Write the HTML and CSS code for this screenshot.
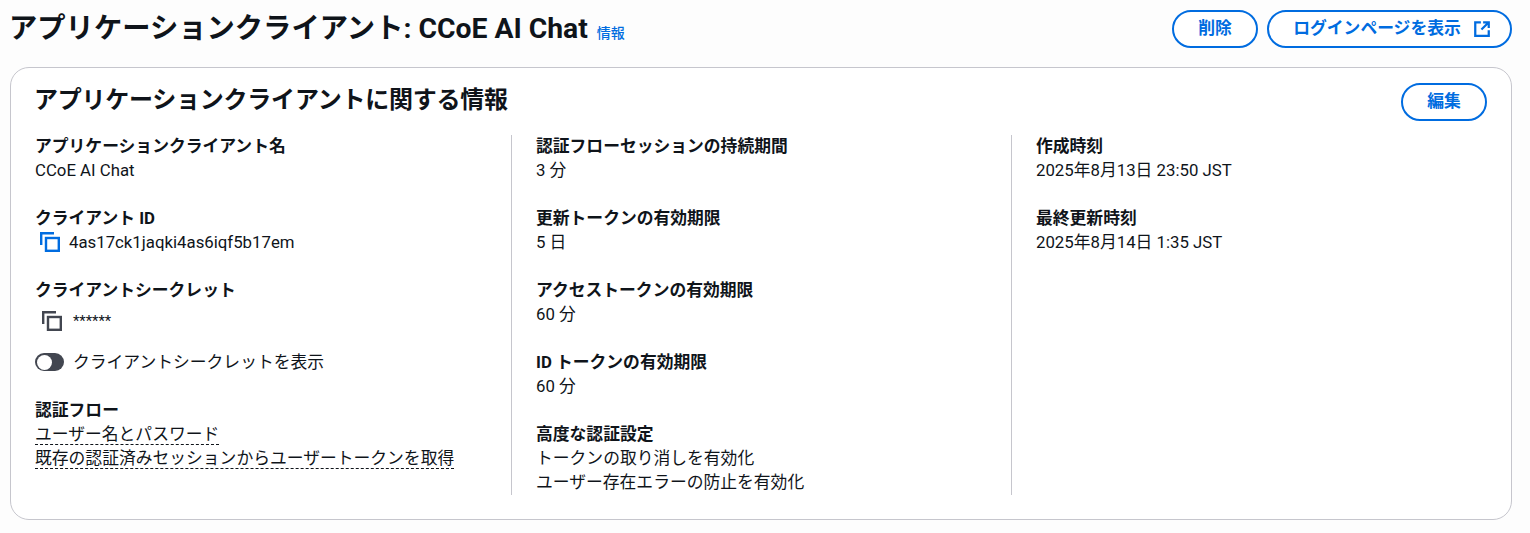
FILE: index.html
```html
<!DOCTYPE html>
<html lang="ja">
<head>
  <meta charset="UTF-8" />
  <title>アプリケーションクライアント: CCoE AI Chat</title>
  <link rel="stylesheet" href="styles.css">
</head>
<body>
  <div class="page-header">
    <div class="title-wrap">
      <h1>アプリケーションクライアント: CCoE AI Chat</h1>
      <a class="info-link">情報</a>
    </div>
    <div class="actions">
      <button class="btn btn-delete">削除</button>
      <button class="btn btn-login">ログインページを表示
        <svg class="ext-icon" viewBox="0 0 16 16" fill="none" stroke="currentColor" stroke-width="2">
          <path d="M7 2H2v12h12V9" />
          <path d="M9 2h5v5M14 2L7.5 8.5" />
        </svg>
      </button>
    </div>
  </div>

  <div class="card">
    <div class="card-header">
      <h2>アプリケーションクライアントに関する情報</h2>
      <button class="btn btn-edit">編集</button>
    </div>
    <div class="columns">
      <div class="col">
        <div class="item">
          <div class="label">アプリケーションクライアント名</div>
          <div class="value">CCoE AI Chat</div>
        </div>
        <div class="item">
          <div class="label">クライアント ID</div>
          <div class="value copy-row">
            <svg class="copy-icon copy-blue" viewBox="0 0 20 20" fill="none" stroke="currentColor" stroke-width="2.4">
              <path d="M1.2 13V1.2H14" />
              <rect x="6" y="6" width="12.8" height="12.8" />
            </svg>
            <span>4as17ck1jaqki4as6iqf5b17em</span>
          </div>
        </div>
        <div class="item item-secret">
          <div class="label">クライアントシークレット</div>
          <div class="value copy-row copy-row-secret">
            <svg class="copy-icon copy-grey" viewBox="0 0 20 20" fill="none" stroke="currentColor" stroke-width="2.4">
              <path d="M1.2 13V1.2H14" />
              <rect x="6" y="6" width="12.8" height="12.8" />
            </svg>
            <span class="secret-text">******</span>
          </div>
          <div class="toggle-row">
            <span class="toggle"><span class="toggle-knob"></span></span>
            <span>クライアントシークレットを表示</span>
          </div>
        </div>
        <div class="item">
          <div class="label">認証フロー</div>
          <div class="value"><span class="dashed">ユーザー名とパスワード</span></div>
          <div class="value"><span class="dashed">既存の認証済みセッションからユーザートークンを取得</span></div>
        </div>
      </div>

      <div class="col col-line">
        <div class="item">
          <div class="label">認証フローセッションの持続期間</div>
          <div class="value">3 分</div>
        </div>
        <div class="item">
          <div class="label">更新トークンの有効期限</div>
          <div class="value">5 日</div>
        </div>
        <div class="item">
          <div class="label">アクセストークンの有効期限</div>
          <div class="value">60 分</div>
        </div>
        <div class="item">
          <div class="label">ID トークンの有効期限</div>
          <div class="value">60 分</div>
        </div>
        <div class="item">
          <div class="label">高度な認証設定</div>
          <div class="value">トークンの取り消しを有効化</div>
          <div class="value">ユーザー存在エラーの防止を有効化</div>
        </div>
      </div>

      <div class="col col-line">
        <div class="item">
          <div class="label">作成時刻</div>
          <div class="value">2025年8月13日 23:50 JST</div>
        </div>
        <div class="item">
          <div class="label">最終更新時刻</div>
          <div class="value">2025年8月14日 1:35 JST</div>
        </div>
      </div>
    </div>
  </div>
</body>
</html>
```

FILE: styles.css
```css
body {
  font-family: Roboto, "Noto Sans CJK JP", sans-serif;
  margin: 0;
  padding: 0 18px 0 10px;
  background-color: #fdfdfd;
  color: #0f141a;
  font-size: 16.8px;
  line-height: 24px;
  overflow: hidden;
}

.page-header {
  display: flex;
  justify-content: space-between;
  align-items: flex-start;
  height: 67px;
}

.title-wrap {
  display: flex;
  align-items: baseline;
  gap: 9px;
  padding-top: 10px;
  margin-left: -1px;
}

h1 {
  font-size: 28.3px;
  line-height: 38px;
  font-weight: 700;
  margin: 0;
}

.info-link {
  color: #006ce0;
  font-size: 14px;
  font-weight: 500;
}

.actions {
  display: flex;
  gap: 9px;
  padding-top: 10px;
}

.btn {
  font-family: inherit;
  font-size: 16.8px;
  font-weight: 700;
  line-height: 22px;
  height: 38px;
  color: #006ce0;
  background: #fff;
  border: 2px solid #006ce0;
  border-radius: 19px;
  padding: 0 0 2px;
  display: flex;
  align-items: center;
  justify-content: center;
  white-space: nowrap;
}

.btn-delete {
  width: 86px;
}

.btn-login {
  width: 245px;
  gap: 12px;
  padding-left: 5px;
}

.ext-icon {
  width: 18px;
  height: 18px;
  flex: none;
  margin-top: 2px;
}

.card {
  background: #fff;
  border: 1px solid #c6c6cd;
  border-radius: 19px;
  height: 453px;
  box-sizing: border-box;
  padding: 15px 24px 24px;
}

.card-header {
  display: flex;
  justify-content: space-between;
  align-items: flex-start;
  height: 52px;
}

h2 {
  font-size: 24px;
  line-height: 32px;
  font-weight: 700;
  letter-spacing: -0.24px;
  margin: 1px 0 0 -1px;
}

.btn-edit {
  width: 86px;
}

.columns {
  display: grid;
  grid-template-columns: 476px 500px 1fr;
  height: 360px;
}

.col-line {
  border-left: 1px solid #c6c6cd;
  padding-left: 24px;
}

.item {
  margin-bottom: 24px;
}

.item:last-child {
  margin-bottom: 0;
}

.label {
  font-weight: 700;
  line-height: 22px;
  padding-bottom: 2px;
}

.value {
  line-height: 22px;
  padding-bottom: 2px;
}

.copy-row {
  display: flex;
  align-items: center;
  gap: 9px;
  padding-left: 5px;
}

.copy-icon {
  width: 20px;
  height: 20px;
  flex: none;
}

.copy-blue {
  color: #006ce0;
}

.copy-grey {
  color: #424650;
  margin-left: 2px;
}

.copy-row-secret {
  height: 36px;
  gap: 11px;
  padding-bottom: 0;
}

.secret-text {
  font-size: 14.8px;
}

.toggle-row {
  display: flex;
  align-items: center;
  gap: 9px;
  margin-top: 12px;
  line-height: 22px;
  padding-bottom: 2px;
}

.toggle {
  width: 29px;
  height: 18px;
  border-radius: 9px;
  background: #424650;
  display: flex;
  align-items: center;
  padding-left: 2px;
  box-sizing: border-box;
}

.toggle-knob {
  width: 15px;
  height: 15px;
  border-radius: 50%;
  background: #fff;
}

.dashed {
  border-bottom: 1px dashed #0f141a;
}
```
